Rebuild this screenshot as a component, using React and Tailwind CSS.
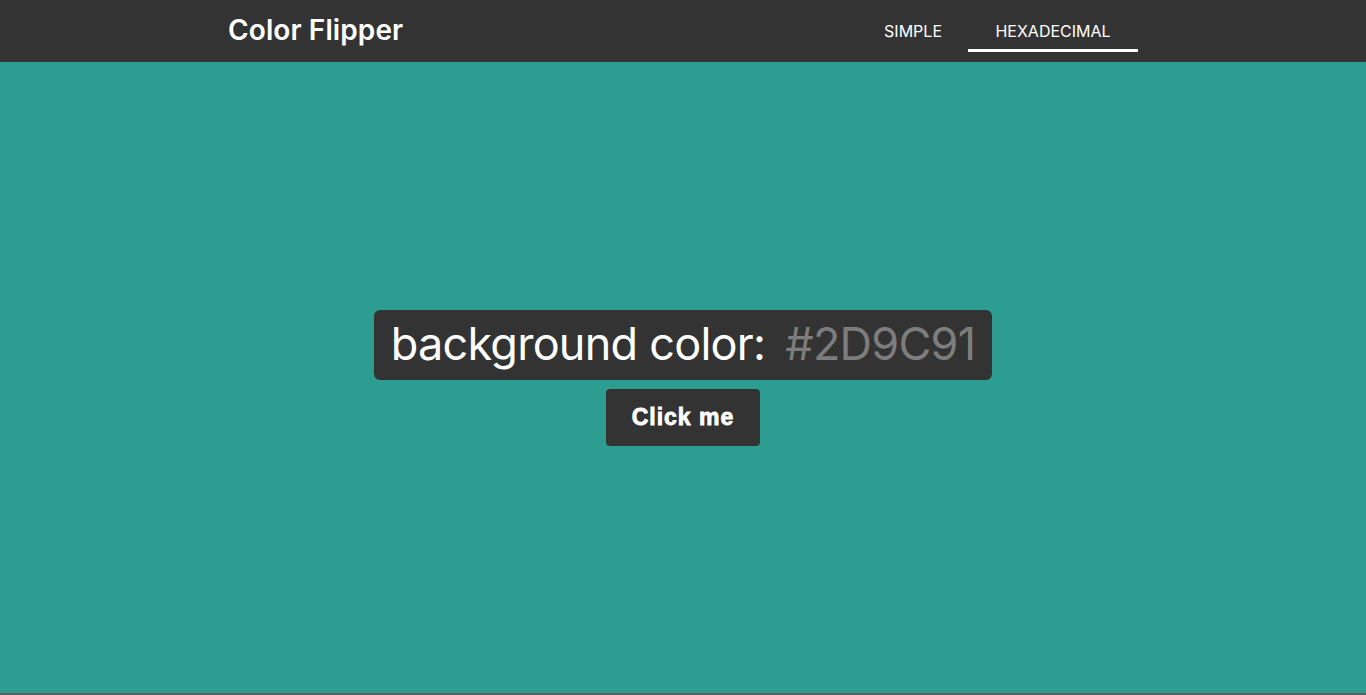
import React, { useState } from 'react';

const App = () => {
  const [tab, setTab] = useState('hex');
  const [color, setColor] = useState('#2D9C91');

  const randomHex = () => {
    const chars = '0123456789ABCDEF';
    let hex = '#';
    for (let i = 0; i < 6; i++) hex += chars[Math.floor(Math.random() * 16)];
    setColor(hex);
  };

  return (
    <div className="h-[695px] flex flex-col font-['Inter',sans-serif]">
      <nav className="h-[62px] bg-[#333333] shrink-0">
        <div className="w-[910px] mx-auto h-full flex items-center justify-between">
          <h1 className="text-[28px] font-semibold text-white tracking-[0.1px] pb-[2px]">Color Flipper</h1>
          <ul className="flex h-full items-start">
            <li>
              <button
                onClick={() => setTab('simple')}
                className={`h-[52px] px-[26px] pt-[12px] text-[16px] text-white border-b-[3px] ${tab === 'simple' ? 'border-white' : 'border-transparent'}`}
              >
                SIMPLE
              </button>
            </li>
            <li>
              <button
                onClick={() => setTab('hex')}
                className={`h-[52px] w-[170px] pt-[12px] text-[16px] text-white border-b-[3px] ${tab === 'hex' ? 'border-white' : 'border-transparent'}`}
              >
                HEXADECIMAL
              </button>
            </li>
          </ul>
        </div>
      </nav>

      <main className="flex-1 flex flex-col items-center justify-center gap-[9px]" style={{ backgroundColor: color }}>
        <h2 className="bg-[#333333] rounded-[6px] h-[70px] px-[17px] flex items-center text-[45px] text-white tracking-[-0.75px] pb-[2px]">
          background color:&nbsp;<span className="text-[#7d7d7d] ml-[8px]">{color}</span>
        </h2>
        <button
          onClick={randomHex}
          className="bg-[#333333] rounded-[4px] w-[154px] h-[57px] text-white text-[23px] font-bold font-['Liberation_Sans',Arial,sans-serif] tracking-[1px] [-webkit-text-stroke:0.8px_white]"
        >
          Click me
        </button>
      </main>
      <div className="h-[2px] bg-[#5a5f5e] shrink-0" />
    </div>
  );
};

export default App;
